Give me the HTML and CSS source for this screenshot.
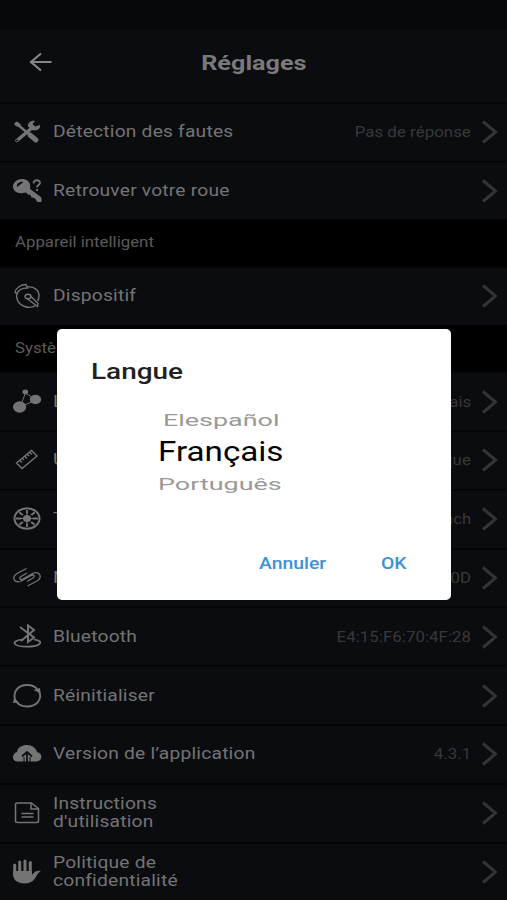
FILE: index.html
```html
<!DOCTYPE html>
<html lang="fr">
<head>
<meta charset="utf-8">
<title>Réglages</title>
<link rel="stylesheet" href="styles.css">
</head>
<body>
<svg class="defs" width="0" height="0"><symbol id="chev" viewBox="0 0 18 24"><path d="M2 1.500 14.500 12 2 22.500" fill="none" stroke="currentColor" stroke-width="3"/></symbol></svg>
<main class="screen">
  <div class="status"></div>
  <header class="bar">
    <svg class="back" viewBox="0 0 24 20"><path d="M22.500 10H2M12 1.500 2 10l10 8.500" fill="none" stroke="currentColor" stroke-width="2.200"/></svg>
    <h1><span class="wide">Réglages</span></h1>
  </header>

  <section class="group">
    <div class="row">
      <svg class="icon" viewBox="0 0 30 26"><path d="M4 5 23 21" stroke="currentColor" stroke-width="2.400"/><path d="M17 16 23 21" stroke="currentColor" stroke-width="5" stroke-linecap="round"/><path d="M1 4.500 4 2.500 8 5.500 5.500 8 2.500 7z" fill="currentColor"/><path d="M4 21.500 20 8" stroke="currentColor" stroke-width="3.500" stroke-linecap="round"/><path d="M15 7.500C14.500 4 18 1 22 2l-2.500 3 2.500 2.500 5-1.500c1 4-4 6.500-8 5z" fill="currentColor"/><circle cx="4" cy="21.500" r="1" fill="#0b0c0f"/></svg>
      <span class="label"><span class="wide">Détection des fautes</span></span>
      <span class="value"><span class="wide">Pas de réponse</span></span>
      <svg class="chev"><use href="#chev"/></svg>
    </div>
    <div class="row">
      <svg class="icon" viewBox="0 0 30 26"><path d="M9.500 1C4 1 0 4.500 0 8.500s4 7.500 10 6.500l3-.5 2 2 2.500.5 1 2.500 3 .5 3 4h4V19.500L17 11c1.500-6-2.500-10-7.500-10zM4 9C3 6 7 2.500 10.500 4z" fill="currentColor" fill-rule="evenodd"/><path d="M20.500 5.500c0-4.500 7-4 6.500-.5-.3 2-3 2.200-3 4.500m0 1.500v2" fill="none" stroke="currentColor" stroke-width="1.800"/></svg>
      <span class="label"><span class="wide">Retrouver votre roue</span></span>
      <svg class="chev"><use href="#chev"/></svg>
    </div>
  </section>

  <h2><span class="wide">Appareil intelligent</span></h2>
  <section class="group">
    <div class="row">
      <svg class="icon thin" viewBox="0 0 30 26"><path d="M14 4c7-1 12 3 12 9 0 2-.5 3.500-1.500 5M23 22.500c-7 4-17 1-19-7-.4-1.500-.4-3 0-4.500M2 9C3 5 8 1.500 13 1.500L14.500 5C9 5 5 7.500 4 11z"/><path d="M14 15.500 24.500 23.500l.5-3-8-8"/><ellipse cx="15" cy="13.500" rx="3" ry="2.300"/></svg>
      <span class="label"><span class="wide">Dispositif</span></span>
      <svg class="chev"><use href="#chev"/></svg>
    </div>
  </section>

  <h2><span class="wide">Système</span></h2>
  <section class="group">
    <div class="row">
      <svg class="icon" viewBox="0 0 30 26"><path d="M7 18 12.500 4 23 11 7 18" fill="none" stroke="currentColor" stroke-width="1"/><ellipse cx="6.600" cy="18" rx="6.600" ry="5.700" fill="currentColor"/><ellipse cx="22.500" cy="10.500" rx="5.700" ry="4.700" fill="currentColor"/><ellipse cx="12.300" cy="3" rx="2.800" ry="2.400" fill="currentColor"/></svg>
      <span class="label"><span class="wide">L</span></span>
      <span class="value"><span class="wide">Français</span></span>
      <svg class="chev"><use href="#chev"/></svg>
    </div>
    <div class="row">
      <svg class="icon thin" viewBox="0 0 30 26"><path d="M3.500 16 18.500 3.500 24 9 9 21.500zM7 13.500l2 2M9.500 11.500l1.500 1.500M12 9.500l2 2M14.500 7.500 16 9M17 5.500l2 2"/></svg>
      <span class="label"><span class="wide">U</span></span>
      <span class="value"><span class="wide">Métrique</span></span>
      <svg class="chev"><use href="#chev"/></svg>
    </div>
    <div class="row">
      <svg class="icon" viewBox="0 0 30 26"><g fill="none" stroke="currentColor"><ellipse cx="14" cy="12.500" rx="12.500" ry="10.200" stroke-width="2"/><path d="M14 4v17M3 12.500h22M6.300 6.200l15.400 12.600M21.700 6.200 6.300 18.800" stroke-width="1.900"/></g><ellipse cx="14" cy="12.500" rx="6" ry="5" fill="#0b0c0f"/><path d="M14 7v11M8 12.500h12" stroke="currentColor" stroke-width="1"/><ellipse cx="14" cy="12.500" rx="4" ry="3.500" fill="currentColor"/></svg>
      <span class="label"><span class="wide">T</span></span>
      <span class="value"><span class="wide">inch</span></span>
      <svg class="chev"><use href="#chev"/></svg>
    </div>
    <div class="row">
      <svg class="icon" viewBox="0 0 30 26"><path d="M13.500 3.500 4 8.500C-2.500 12.500 2 19 8.500 16L18 10.500C21 9 22.500 11.500 20 13L14 16.500M14.500 21 24 16C30.500 12 26 5.500 19.500 8.500L10 14C7 15.500 5.500 13 8 11.500L14 8" fill="none" stroke="currentColor" stroke-width="1.300"/></svg>
      <span class="label"><span class="wide">N</span></span>
      <span class="value"><span class="wide">0D</span></span>
      <svg class="chev"><use href="#chev"/></svg>
    </div>
    <div class="row">
      <svg class="icon" viewBox="0 0 30 26"><g fill="none" stroke="currentColor"><path d="M9 15.500C-3 17 0 22.700 14 22.700s18-5.700 7-7.200" stroke-width="1.700"/><path d="m7 3 14 10.500-6 4.500V1.500l6 4.500L8 17" stroke-width="2"/></g></svg>
      <span class="label"><span class="wide">Bluetooth</span></span>
      <span class="value"><span class="wide">E4:15:F6:70:4F:28</span></span>
      <svg class="chev"><use href="#chev"/></svg>
    </div>
    <div class="row">
      <svg class="icon" viewBox="0 0 30 26"><path d="M2.500 18C-1 9 5 2 14 2c5 0 9 2 11 5.500M26 8c4 9-3 15.500-12 15.500-5 0-9-2-11-5.500" fill="none" stroke="currentColor" stroke-width="1.900"/><path d="m20.500 7 6.500-2 .5 5.500zM0 20l1-5 5 4.500z" fill="currentColor"/></svg>
      <span class="label"><span class="wide">Réinitialiser</span></span>
      <svg class="chev"><use href="#chev"/></svg>
    </div>
    <div class="row">
      <svg class="icon" viewBox="0 0 30 26"><path d="M5 20.500C-2 20.500-1 12 4 11 5 6 9 4 14 4s9 3 10 7c6 1 6 9.500-1 9.500z" fill="currentColor"/><path d="M14 21.500v-9M9 15.500l5-4.500 5 4.500" fill="none" stroke="#0b0c0f" stroke-width="1.700"/><path d="M11 16v5M17 16v5" stroke="#0b0c0f" stroke-width="1"/></svg>
      <span class="label"><span class="wide">Version de l’application</span></span>
      <span class="value"><span class="wide">4.3.1</span></span>
      <svg class="chev"><use href="#chev"/></svg>
    </div>
    <div class="row">
      <svg class="icon" viewBox="0 0 30 26"><g fill="none" stroke="currentColor" stroke-width="1.500"><path d="M4.500 3h14l7 5.500V21q0 1.500-2 1.500h-19q-2 0-2-1.500V4.500Q2.500 3 4.500 3zM18 3.500V9h7"/><path d="M8.500 13.500h12M8.500 17h12"/></g></svg>
      <span class="label"><span class="wide">Instructions<br>d'utilisation</span></span>
      <svg class="chev"><use href="#chev"/></svg>
    </div>
    <div class="row">
      <svg class="icon" viewBox="0 0 30 26"><g stroke="currentColor" stroke-width="3" stroke-linecap="round"><path d="M1.700 6v10M6.700 3v12M12 2v13M17.300 3.500V15"/></g><path d="M.2 12h18.600v4c3-3.500 5-5 9.200-4-4 1.500-5 8-9 10.500-4 2.500-11 2.500-15 0C.2 20.500.2 17 .2 12z" fill="currentColor"/></svg>
      <span class="label"><span class="wide">Politique de<br>confidentialité</span></span>
      <svg class="chev"><use href="#chev"/></svg>
    </div>
  </section>
</main>

<div class="dialog" role="dialog">
  <h3><span class="wide">Langue</span></h3>
  <div class="picker">
    <div class="opt es"><span class="wide">Elespañol</span></div>
    <div class="opt fr"><span class="wide">Français</span></div>
    <div class="opt pt"><span class="wide">Português</span></div>
  </div>
  <div class="actions">
    <span class="cancel"><span class="wide">Annuler</span></span>
    <span class="ok"><span class="wide">OK</span></span>
  </div>
</div>
</body>
</html>
```
FILE: styles.css
```css
* { box-sizing: border-box; }
body {
  margin: 0;
  width: 507px;
  height: 900px;
  overflow: hidden;
  background: #000;
  color: #747475;
  font-family: Roboto, "Liberation Sans", sans-serif;
}
h1, h2, h3 { margin: 0; }
.defs { display: block; }
.screen { width: 507px; height: 900px; overflow: hidden; }
.wide {
  display: inline-block;
  white-space: nowrap;
  transform: scaleX(1.2);
  transform-origin: left center;
}
.status { height: 29px; background: #070809; }
.bar {
  height: 72.800px;
  display: grid;
  grid-template-columns: 52px 1fr 52px;
  align-items: center;
  padding-bottom: 6.300px;
  background: #0b0c0f;
}
.back { width: 24px; height: 20px; margin-left: 29px; color: #858586; }
.bar h1 { padding-top: 2px; font-size: 21px; font-weight: 700; line-height: 26px; text-align: center; color: #7a7a7b; }
.bar .wide { transform-origin: center; }

.row {
  height: 58.800px;
  display: flex;
  align-items: center;
  padding: 0 8px 0 13px;
  background: #0b0c0f;
  border-top: 2px solid #040405;
}
.icon { width: 30px; height: 26px; flex: none; color: #747475; }
.thin { fill: none; stroke: currentColor; stroke-width: 1.400; }
.label { margin-left: 10px; flex: 1; font-size: 16px; line-height: 18px; letter-spacing: .170px; }
.value { margin-right: 10px; font-size: 14px; letter-spacing: .050px; color: #38383a; }
.value .wide { transform-origin: right center; }
.chev { width: 18px; height: 24px; flex: none; color: #343436; }
h2 {
  height: 46.500px;
  padding: 0 15px;
  font-size: 14px;
  line-height: 47px;
  font-weight: 400;
  color: #5b5b5c;
  background: #000;
}

.dialog {
  position: absolute;
  left: 57px;
  top: 329px;
  width: 394px;
  height: 271px;
  display: flex;
  flex-direction: column;
  background: #fff;
  border-radius: 5px;
}
.dialog h3 { padding: 29px 0 0 34px; font-size: 22px; line-height: 28px; font-weight: 500; color: #212121; }
.dialog h3 .wide { transform: scaleX(1.270); }
.picker { margin-top: 24px; display: flex; flex-direction: column; }
.opt { color: #000; }
.es { height: 22px; padding-left: 106px; font-size: 18px; line-height: 22px; color: #999; }
.fr { height: 40px; padding-left: 101px; font-size: 28px; line-height: 40px; }
.pt { height: 25px; padding-left: 101px; font-size: 18px; line-height: 25px; color: #999; }
.fr .wide { transform: scaleX(1.185); }
.es .wide, .pt .wide { transform: scale(1.495, .9); }
.actions {
  margin-top: 54px;
  display: flex;
  padding-left: 202px;
  font-size: 17px;
  line-height: 24px;
  font-weight: 500;
  color: #3a93d8;
}
.actions .wide { transform: scaleX(1.140); }
.cancel { width: 122px; }
```
